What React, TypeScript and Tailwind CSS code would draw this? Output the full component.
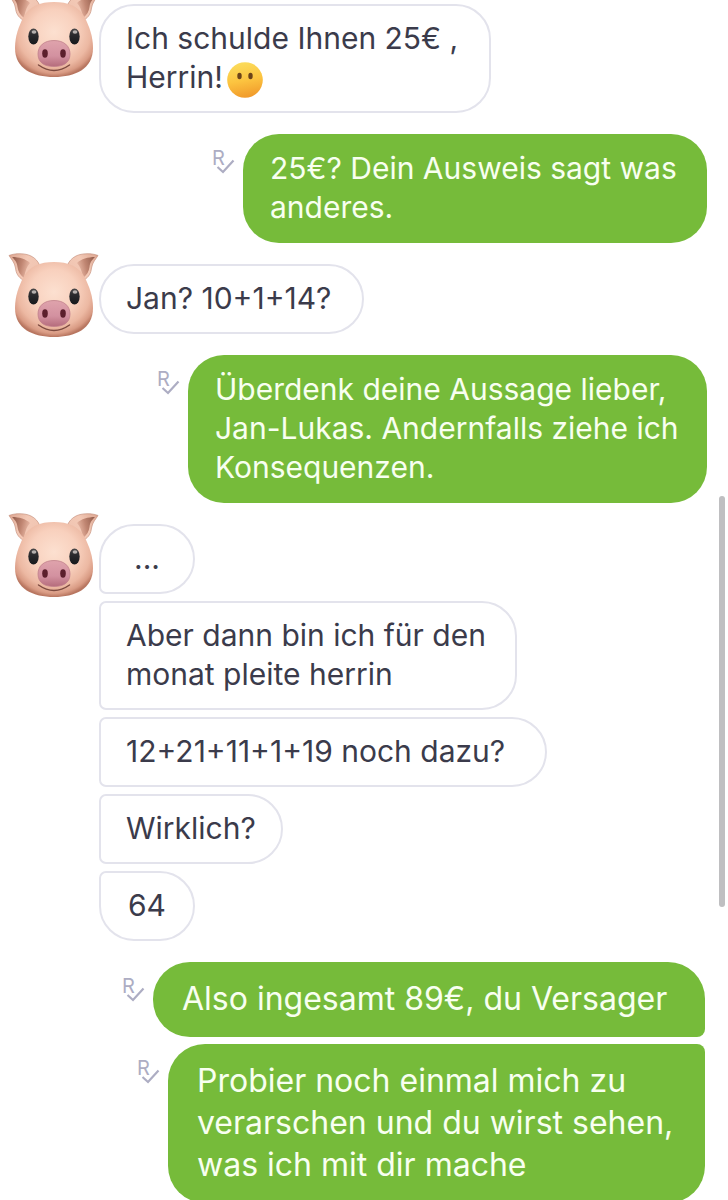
import clsx from "clsx";

function PigAvatar() {
  return (
    <svg viewBox="0 0 92 86" className="-mt-[11px] -mb-8 ml-[7px] h-[86px] w-[92px]" role="img" aria-label="Schwein">
      <defs>
        <radialGradient id="pig-face" cx="0.5" cy="0.4" r="0.6">
          <stop offset="0" stopColor="#fce0d0" />
          <stop offset="0.5" stopColor="#f8d0bd" />
          <stop offset="0.78" stopColor="#ecb8a2" />
          <stop offset="0.92" stopColor="#d99b84" />
          <stop offset="1" stopColor="#b87660" />
        </radialGradient>
        <linearGradient id="pig-ear" x1="0" y1="0" x2="1" y2="0.6">
          <stop offset="0" stopColor="#dba38e" />
          <stop offset="0.5" stopColor="#f3c9b6" />
          <stop offset="1" stopColor="#f0c4b1" />
        </linearGradient>
        <linearGradient id="pig-inner" x1="0" y1="0.3" x2="1" y2="0.6">
          <stop offset="0" stopColor="#96604f" />
          <stop offset="0.5" stopColor="#c08672" />
          <stop offset="1" stopColor="#eebfac" />
        </linearGradient>
        <linearGradient id="pig-snout" x1="0" y1="0" x2="0" y2="1">
          <stop offset="0" stopColor="#dfa3ac" />
          <stop offset="0.6" stopColor="#d391a0" />
          <stop offset="1" stopColor="#b56c7c" />
        </linearGradient>
        <linearGradient id="pig-eye" x1="0" y1="0" x2="0" y2="1">
          <stop offset="0" stopColor="#4c4a4b" />
          <stop offset="0.4" stopColor="#2a2a2d" />
          <stop offset="1" stopColor="#17191c" />
        </linearGradient>
        <g id="pig-ear-shape">
          <path d="M2 2.500C8 0 18 0 24 3C28 5 31 8 33 13L16 27C11 24 9 20 8.500 15C7.500 9 4 6 2 2.500Z" fill="url(#pig-ear)" stroke="#c08672" strokeWidth="0.6" />
          <path d="M5 4C12 4 19 6 23 10C20 13 18 18 17 25C13 22 11 18 10.500 14C10 9 8 7 5 4Z" fill="url(#pig-inner)" />
        </g>
      </defs>
      <use href="#pig-ear-shape" />
      <use href="#pig-ear-shape" transform="translate(93 0) scale(-1 1)" />
      <path d="M47 9C61 9 72 13 78 25C82 33 86 43 86 55C86 76 68 84 47 84C26 84 8 76 8 55C8 43 12 33 16 25C22 13 33 9 47 9Z" fill="url(#pig-face)" />
      <ellipse cx="26.5" cy="43.5" rx="5.2" ry="8" fill="url(#pig-eye)" />
      <ellipse cx="67.5" cy="43.5" rx="5.2" ry="8" fill="url(#pig-eye)" />
      <ellipse cx="27" cy="39" rx="2.4" ry="1.7" fill="#b4afad" />
      <ellipse cx="68" cy="39" rx="2.4" ry="1.7" fill="#b4afad" />
      <path d="M31.5 72Q47 83 62.5 72" fill="none" stroke="#7d4b40" strokeWidth="1.5" strokeLinecap="round" />
      <path d="M47 47.500C57 47.500 63 53 63 61C63 70 56 73.500 47 73.500C38 73.500 31 70 31 61C31 53 37 47.500 47 47.500Z" fill="url(#pig-snout)" stroke="#c07f8a" strokeWidth="0.8" />
      <ellipse cx="38" cy="60.5" rx="2.8" ry="4.2" fill="#5c1f2c" />
      <ellipse cx="56" cy="60.5" rx="2.8" ry="4.2" fill="#5c1f2c" />
    </svg>
  );
}

function NoMouthEmoji() {
  return (
    <svg viewBox="0 0 36 36" className="-my-2 ml-1 inline-block size-9 align-middle" role="img" aria-label="Gesicht ohne Mund">
      <defs>
        <linearGradient id="emoji-face" x1="0.4" y1="0" x2="0.6" y2="1">
          <stop offset="0" stopColor="#fbdc5c" />
          <stop offset="0.5" stopColor="#fcc440" />
          <stop offset="1" stopColor="#f0982a" />
        </linearGradient>
      </defs>
      <circle cx="18" cy="18" r="17.8" fill="url(#emoji-face)" />
      <ellipse cx="12.5" cy="14" rx="2.2" ry="3.2" fill="#6b431a" />
      <ellipse cx="23.5" cy="14" rx="2.2" ry="3.2" fill="#6b431a" />
    </svg>
  );
}

function ReadMark() {
  return (
    <span className="relative mt-3 mr-2 block h-7 w-6 shrink-0 pl-px text-[20px] leading-6 text-[#adadc3]">
      R
      <svg viewBox="0 0 20 15" className="absolute right-0 bottom-0 h-[15px] w-5" fill="none" stroke="currentColor" strokeWidth="2.2" aria-hidden="true">
        <path d="M2.500 8L8 13L18.500 1.500" />
      </svg>
    </span>
  );
}

type Shape = "single" | "first" | "middle" | "last";

const incomingShape: Record<Shape, string> = {
  single: "rounded-[35px]",
  first: "rounded-[35px] rounded-bl-[7px]",
  middle: "rounded-[35px] rounded-l-[7px]",
  last: "rounded-[35px] rounded-tl-[7px]",
};

const outgoingShape: Record<Shape, string> = {
  single: "rounded-[36px]",
  first: "rounded-[37px] rounded-br-[8px]",
  middle: "rounded-[37px] rounded-r-[8px]",
  last: "rounded-[37px] rounded-tr-[8px]",
};

type Message = { text: string; shape: Shape; width?: string; emoji?: boolean };

function Incoming({ messages }: { messages: Message[] }) {
  return (
    <section className="flex items-start">
      <div className="w-[99px] shrink-0">
        <PigAvatar />
      </div>
      <div className="flex flex-col items-start gap-[7px]">
        {messages.map((m) => (
          <p
            key={m.text}
            className={clsx(
              "border-2 border-[#e3e3ec] px-[25px] pt-[13px] pb-[14px] text-[30px] leading-[39px] whitespace-pre-line text-[#3b3b4b]",
              m.width ?? "min-w-24",
              m.text.length < 4 && "text-center",
              incomingShape[m.shape],
            )}
          >
            {m.text}
            {m.emoji && <NoMouthEmoji />}
          </p>
        ))}
      </div>
    </section>
  );
}

function Outgoing({ messages, large }: { messages: Message[]; large?: boolean }) {
  return (
    <section className={clsx("flex flex-col items-end gap-[7px]", large ? "pr-[23px]" : "pr-[21px]")}>
      {messages.map((m) => (
        <div key={m.text} className="flex items-start">
          <ReadMark />
          <p
            className={clsx(
              "bg-[#76bb3a] whitespace-pre-line text-[#f8fff0]",
              large ? "px-[29px] pt-4 pb-[17px] text-[32px] leading-[42px]" : "px-[27px] pt-[15px] pb-4 text-[30px] leading-[39px]",
              m.width,
              outgoingShape[m.shape],
            )}
          >
            {m.text}
          </p>
        </div>
      ))}
    </section>
  );
}

export default function App() {
  return (
    <main className="relative flex h-screen flex-col gap-[21px] overflow-hidden bg-white pt-1 font-['Inter','Noto_Sans',sans-serif]">
      <Incoming messages={[{ text: "Ich schulde Ihnen 25€ ,\nHerrin!", shape: "single", width: "min-w-[392px]", emoji: true }]} />
      <Outgoing messages={[{ text: "25€? Dein Ausweis sagt was\nanderes.", shape: "single", width: "min-w-[464px]" }]} />
      <Incoming messages={[{ text: "Jan? 10+1+14?", shape: "single", width: "min-w-[265px]" }]} />
      <Outgoing
        messages={[
          { text: "Überdenk deine Aussage lieber,\nJan-Lukas. Andernfalls ziehe ich\nKonsequenzen.", shape: "single", width: "min-w-[519px]" },
        ]}
      />
      <Incoming
        messages={[
          { text: "...", shape: "first" },
          { text: "Aber dann bin ich für den\nmonat pleite herrin", shape: "middle", width: "min-w-[418px]" },
          { text: "12+21+11+1+19 noch dazu?", shape: "middle", width: "min-w-[448px]" },
          { text: "Wirklich?", shape: "middle" },
          { text: "64", shape: "last" },
        ]}
      />
      <Outgoing
        large
        messages={[
          { text: "Also ingesamt 89€, du Versager", shape: "first", width: "min-w-[552px]" },
          { text: "Probier noch einmal mich zu\nverarschen und du wirst sehen,\nwas ich mit dir mache", shape: "last", width: "min-w-[537px]" },
        ]}
      />
      <div className="absolute top-[496px] right-[3px] h-[411px] w-[6px] rounded-full bg-[#bfbfc1]" aria-hidden="true" />
    </main>
  );
}
